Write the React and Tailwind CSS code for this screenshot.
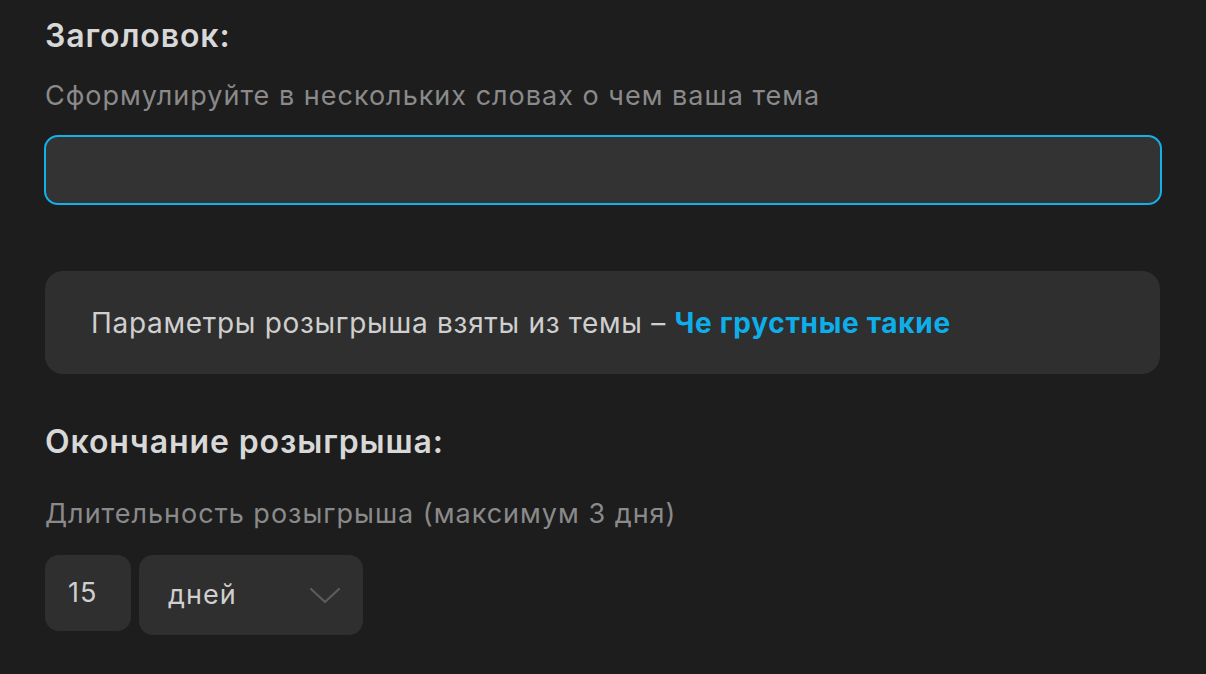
import React from "react";

function Chevron() {
  return (
    <svg width="32" height="18" viewBox="0 0 32 18" fill="none">
      <path d="M2 3 L16 16 L30 3" stroke="#5c5c5c" strokeWidth="2.2" strokeLinecap="round" strokeLinejoin="round" />
    </svg>
  );
}

export default function App() {
  return (
    <div
      className="min-h-[674px] w-full bg-[#1d1d1e] px-[45px] pt-[18px]"
      style={{ fontFamily: "Inter, 'Noto Sans', sans-serif" }}
    >
      {/* Title */}
      <h2 className="text-[32px] leading-[36px] font-semibold tracking-[0.9px] text-[#d8d8d8]">Заголовок:</h2>
      <p className="mt-[26px] text-[27px] leading-[32px] tracking-[1px] text-[#8a8a8a]">
        Сформулируйте в нескольких словах о чем ваша тема
      </p>
      <input
        type="text"
        className="mt-[23px] block h-[70px] w-[1118px] -ml-px rounded-[14px] border-2 border-[#13b1ea] bg-[#333333] px-5 text-[26px] text-[#d8d8d8] outline-none"
      />

      {/* Info */}
      <div className="mt-[66px] flex h-[103px] w-[1115px] items-center rounded-[18px] bg-[#2f2f2f] px-[46px]">
        <p className="text-[28px] leading-[32px] tracking-[0.7px] text-[#cfcfcf]">
          Параметры розыгрыша взяты из темы –{" "}
          <span className="font-bold text-[#0eaeea]">Че грустные такие</span>
        </p>
      </div>

      {/* End */}
      <h2 className="mt-[50px] text-[32px] leading-[36px] font-semibold tracking-[0.9px] text-[#d8d8d8]">
        Окончание розыгрыша:
      </h2>
      <p className="mt-[38px] text-[27px] leading-[32px] tracking-[1px] text-[#8a8a8a]">
        Длительность розыгрыша (максимум 3 дня)
      </p>
      <div className="mt-[25px] flex items-start gap-2">
        <div className="flex h-[76px] w-[86px] items-center rounded-[14px] bg-[#2f2f2f] pl-[23px] text-[27px] tracking-[1px] text-[#cfcfcf]">
          15
        </div>
        <div className="flex h-[80px] w-[224px] items-center justify-between rounded-[14px] bg-[#2f2f2f] pl-[29px] pr-[22px] text-[27px] tracking-[1px] text-[#cfcfcf]">
          <span>дней</span>
          <Chevron />
        </div>
      </div>
    </div>
  );
}
